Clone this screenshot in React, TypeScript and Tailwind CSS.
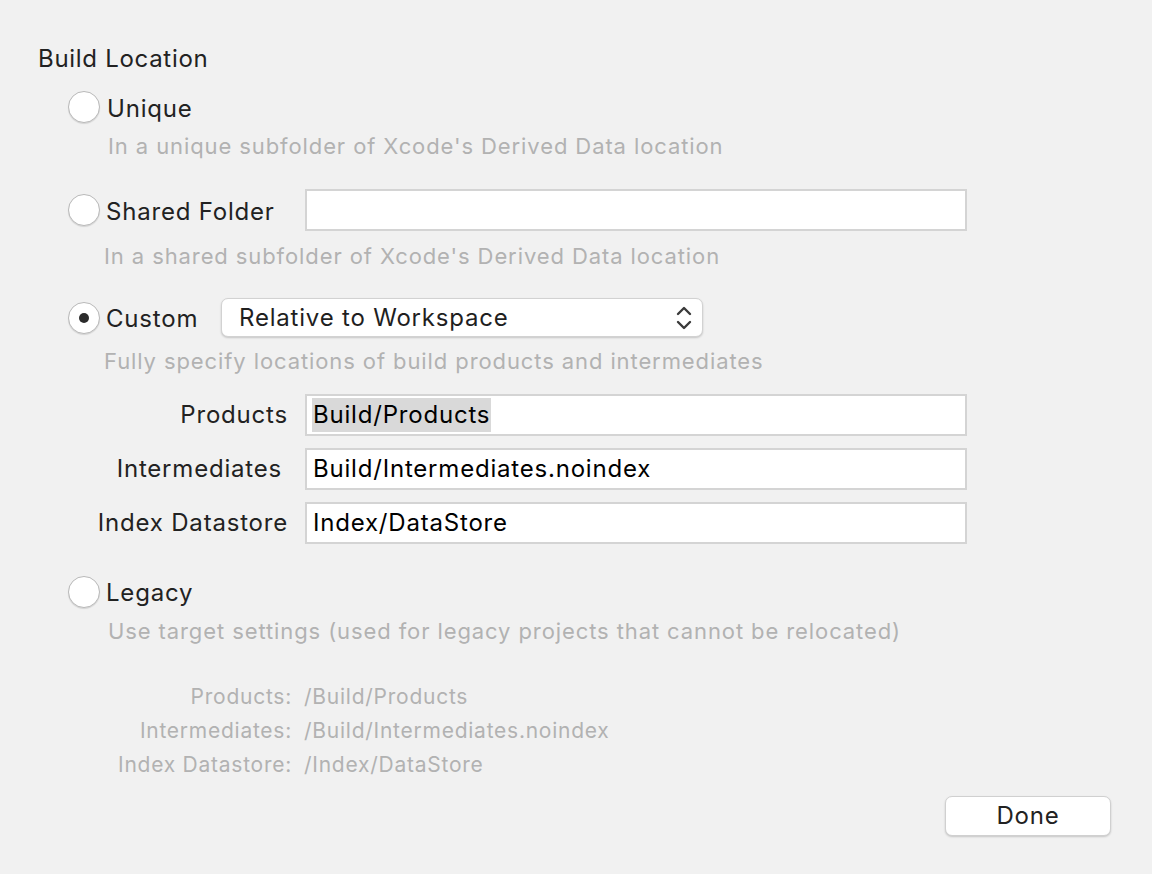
import React from "react";

const font = { fontFamily: "Inter, 'Noto Sans', sans-serif" };

function Radio({ checked = false }: { checked?: boolean }) {
  return (
    <div className="w-[32px] h-[32px] rounded-full bg-white border border-[#b9b9b9] shadow-[0_1px_1px_rgba(0,0,0,0.12)] flex items-center justify-center shrink-0">
      {checked && <div className="w-[10px] h-[10px] rounded-full bg-[#2b2b2b]" />}
    </div>
  );
}

function TextField({ children, highlight = false }: { children?: React.ReactNode; highlight?: boolean }) {
  return (
    <div className="w-[662px] h-[42px] bg-white border-2 border-[#d4d4d4] flex items-center pl-[5px]">
      {children && (
        <span className={`text-[24px] tracking-[0.8px] text-[#000] leading-[34px] px-[1px] ${highlight ? "bg-[#d9d9d9]" : ""}`}>
          {children}
        </span>
      )}
    </div>
  );
}

export default function App() {
  return (
    <div style={font} className="w-[1152px] h-[874px] bg-[#f1f1f1] text-[#222222] flex flex-col pl-[38px] pt-[45px] relative tracking-[0.8px]">
      <div className="text-[24px] leading-[28px] h-[28px] tracking-[0.7px]">Build Location</div>

      {/* Unique */}
      <div className="mt-[18px] ml-[30px] flex items-center h-[32px]">
        <Radio />
        <span className="ml-[7px] text-[24px] leading-[28px] mt-[3px]">Unique</span>
      </div>
      <div className="mt-[10px] ml-[70px] h-[26px] text-[22px] leading-[26px] text-[#b2b2b2] tracking-[0.9px]">
        In a unique subfolder of Xcode's Derived Data location
      </div>

      {/* Shared Folder */}
      <div className="mt-[30px] ml-[30px] flex items-center h-[42px]">
        <Radio />
        <span className="ml-[6px] text-[24px] leading-[28px] w-[199px] mt-[4px]">Shared Folder</span>
        <TextField />
      </div>
      <div className="mt-[12px] ml-[66px] h-[26px] text-[22px] leading-[26px] text-[#b2b2b2] tracking-[0.9px]">
        In a shared subfolder of Xcode's Derived Data location
      </div>

      {/* Custom */}
      <div className="mt-[29px] ml-[30px] flex items-center h-[39px]">
        <Radio checked />
        <span className="ml-[6px] text-[24px] leading-[28px] w-[115px] mt-[2px]">Custom</span>
        <div className="w-[482px] h-[39px] bg-white rounded-[7px] border border-[#d2d2d2] shadow-[0_1px_2px_rgba(0,0,0,0.18)] flex items-center justify-between pl-[17px] pr-[10px]">
          <span className="text-[24px] leading-[28px] text-[#1f1f1f]">Relative to Workspace</span>
          <svg width="16" height="26" viewBox="0 0 16 26" fill="none" stroke="#3a3a3a" strokeWidth="2.4" strokeLinecap="round" strokeLinejoin="round">
            <path d="M2 9 L8 3 L14 9" />
            <path d="M2 17 L8 23 L14 17" />
          </svg>
        </div>
      </div>
      <div className="mt-[11px] ml-[66px] h-[26px] text-[22px] leading-[26px] text-[#b2b2b2] tracking-[0.9px]">
        Fully specify locations of build products and intermediates
      </div>

      {/* Paths */}
      <div className="mt-[20px] flex flex-col gap-[12px]">
        <div className="flex items-center h-[42px]">
          <div className="w-[250px] text-right text-[24px] leading-[28px]">Products</div>
          <div className="ml-[17px]">
            <TextField highlight>Build/Products</TextField>
          </div>
        </div>
        <div className="flex items-center h-[42px]">
          <div className="w-[244px] text-right text-[24px] leading-[28px]">Intermediates</div>
          <div className="ml-[23px]">
            <TextField>Build/Intermediates.noindex</TextField>
          </div>
        </div>
        <div className="flex items-center h-[42px]">
          <div className="w-[250px] text-right text-[24px] leading-[28px]">Index Datastore</div>
          <div className="ml-[17px]">
            <TextField>Index/DataStore</TextField>
          </div>
        </div>
      </div>

      {/* Legacy */}
      <div className="mt-[32px] ml-[30px] flex items-center h-[32px]">
        <Radio />
        <span className="ml-[6px] text-[24px] leading-[28px] mt-[2px]">Legacy</span>
      </div>
      <div className="mt-[10px] ml-[70px] h-[26px] text-[22px] leading-[26px] text-[#b2b2b2] tracking-[0.9px]">
        Use target settings (used for legacy projects that cannot be relocated)
      </div>

      {/* Legacy paths */}
      <div className="mt-[36px] flex flex-col text-[21px] leading-[34px] text-[#b2b2b2] tracking-[0.75px]">
        <div className="flex">
          <div className="w-[254px] text-right">Products:</div>
          <div className="ml-[12px]">/Build/Products</div>
        </div>
        <div className="flex">
          <div className="w-[254px] text-right">Intermediates:</div>
          <div className="ml-[12px]">/Build/Intermediates.noindex</div>
        </div>
        <div className="flex">
          <div className="w-[254px] text-right">Index Datastore:</div>
          <div className="ml-[12px]">/Index/DataStore</div>
        </div>
      </div>

      <div className="flex justify-end pr-[41px] mt-[14px]">
        <button className="w-[166px] h-[40px] bg-white rounded-[7px] border border-[#d0d0d0] shadow-[0_1px_2px_rgba(0,0,0,0.18)] text-[24px] leading-[28px] text-[#222222] tracking-[0.8px]">
          Done
        </button>
      </div>
    </div>
  );
}
